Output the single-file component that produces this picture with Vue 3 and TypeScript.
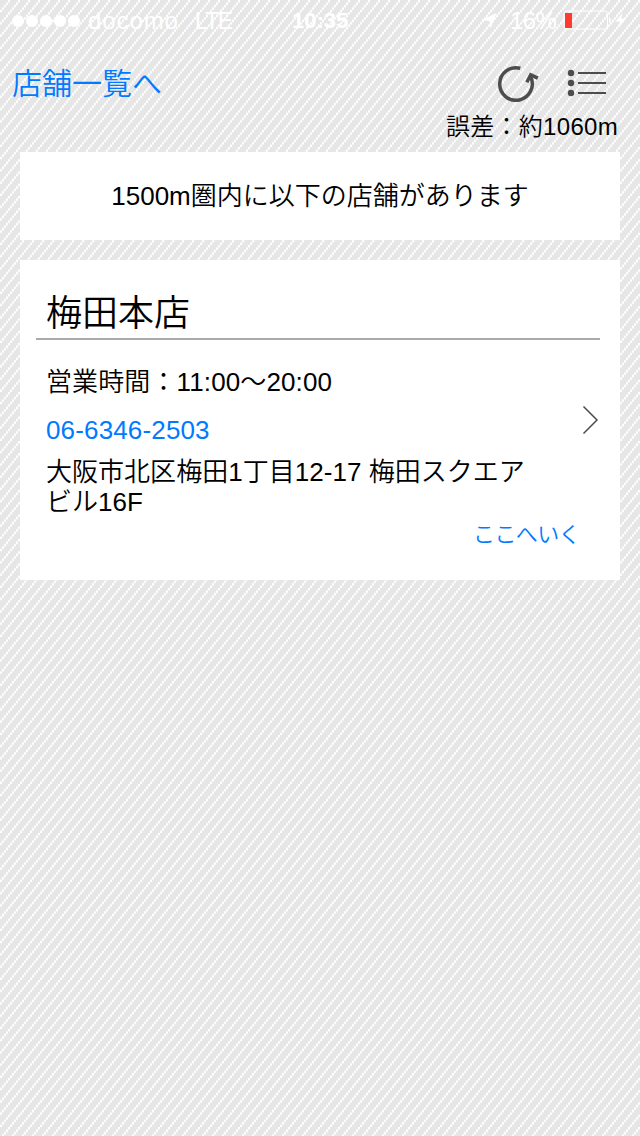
<script setup lang="ts">
const signal: number[] = [1, 2, 3, 4, 5]
const shop = {
  name: '梅田本店',
  hours: '営業時間：11:00〜20:00',
  tel: '06-6346-2503',
  address: ['大阪市北区梅田1丁目12-17 梅田スクエア', 'ビル16F'],
}
</script>

<template>
  <div class="screen">
    <svg class="backdrop" width="640" height="1136">
      <defs>
        <pattern id="stripes" width="10" height="12.25" patternUnits="userSpaceOnUse">
          <rect width="10" height="12.25" fill="#e6e6e6" />
          <path fill="#fff" d="M8 0h2v2.45h-2zM6 2.45h2v2.45h-2zM4 4.9h2v2.45h-2zM2 7.35h2v2.45h-2zM0 9.8h2v2.45h-2z" />
        </pattern>
      </defs>
      <rect width="640" height="1136" fill="url(#stripes)" />
    </svg>
    <header class="status">
      <div class="dots"><i v-for="n in signal" :key="n"></i></div>
      <span class="carrier">docomo</span>
      <span class="network">LTE</span>
      <b class="time">10:35</b>
      <svg class="location" width="16" height="16" viewBox="0 0 16 16"><path fill="#fff" d="M15.500 0 9.500 15.500 8.500 8 0.500 7z" /></svg>
      <span class="percent">16%</span>
      <svg class="battery" width="64" height="20" viewBox="0 0 64 20">
        <rect x="1" y="1" width="43.500" height="18" rx="3" fill="none" stroke="#fff" />
        <rect x="2" y="3" width="7" height="15" fill="#ff3b30" />
        <path fill="#fff" d="M46 6.500q3.500 3.500 0 7zM59.500 3l-7 8.500h4.500l-2 6.500 8-9.500h-5z" />
      </svg>
    </header>
    <nav class="nav">
      <a class="back">店舗一覧へ</a>
      <svg class="refresh" width="44" height="40" viewBox="0 0 44 40" fill="none" stroke="#4d4d4d" stroke-width="3.500">
        <path d="M25.300 4.300A16.300 16.300 0 1 0 35.600 12.800" />
        <path d="M31.800 18.200 35.700 10.800 42.800 14.200" />
      </svg>
      <svg class="list" width="40" height="28" viewBox="0 0 40 28" fill="#4d4d4d">
        <circle cx="4" cy="4" r="3.200" /><circle cx="4" cy="14" r="3.200" /><circle cx="4" cy="24" r="3.200" />
        <path d="M11 3h28v2H11zM11 13h28v2H11zM11 23h28v2H11z" />
      </svg>
    </nav>
    <p class="accuracy">誤差：約1060m</p>
    <section class="notice">1500m圏内に以下の店舗があります</section>
    <section class="card">
      <h1>{{ shop.name }}</h1>
      <p class="hours">{{ shop.hours }}</p>
      <a class="tel">{{ shop.tel }}</a>
      <p class="address"><span v-for="line in shop.address" :key="line">{{ line }}</span></p>
      <a class="go">ここへいく</a>
      <svg class="chevron" width="18" height="30" viewBox="0 0 18 30"><path d="M1.500 1.500 15 15 1.500 28.500" fill="none" stroke="#4d4d4d" stroke-width="1.500" /></svg>
    </section>
  </div>
</template>

<style>
body { margin: 0; background: #e6e6e6; }
</style>
<style scoped>
.screen {
  position: relative;
  width: 640px;
  height: 1136px;
  overflow: hidden;
  color: #000;
  font-family: "Liberation Sans", "Noto Sans CJK JP DemiLight", "Noto Sans CJK JP", sans-serif;
  font-size: 26px;
  font-weight: 350;
}
.backdrop { position: absolute; inset: 0; z-index: -1; }
.status { display: flex; align-items: center; height: 40px; box-sizing: border-box; padding: 2px 0 0 12px; color: #fff; font-size: 24px; }
.dots { display: flex; gap: 2px; width: 68px; }
.dots i { width: 12px; height: 12px; border-radius: 50%; background: #fff; }
.carrier { width: 90px; margin-left: 8px; letter-spacing: 0.9px; }
.network { width: 38px; margin-left: 17px; font-size: 23px; letter-spacing: -1.2px; }
.time { width: 58px; margin-left: 59px; font-size: 22px; font-weight: 700; }
.location { margin-left: 131px; }
.percent { width: 48px; margin-left: 13px; font-size: 24px; letter-spacing: -0.6px; }
.battery { margin-left: 5px; flex: none; position: relative; top: -1px; }
.nav { display: flex; height: 72px; align-items: flex-start; padding-left: 12px; }
.back { width: 483px; margin-top: 24px; color: #007aff; font-size: 30px; line-height: 40px; }
.refresh { margin-top: 24px; }
.list { margin: 29px 0 0 28px; }
.accuracy { height: 40px; margin: 0; padding-right: 22px; font-size: 24px; line-height: 29px; text-align: right; letter-spacing: 0.3px; }
.notice { height: 88px; margin: 0 20px; background: #fff; line-height: 88px; text-align: center; }
.card { position: relative; display: flex; flex-direction: column; align-items: flex-start; height: 320px; margin: 20px 20px 0; box-sizing: border-box; padding: 28px 20px 0 16px; background: #fff; }
h1 { align-self: stretch; height: 52px; margin: 0; padding-left: 10px; box-sizing: border-box; border-bottom: 2px solid #aaa; font-size: 36px; line-height: 52px; font-weight: 350; }
.hours { margin: 27px 0 0 10px; line-height: 30px; letter-spacing: 0.12px; }
.tel { margin: 18px 0 0 10px; color: #007aff; line-height: 30px; letter-spacing: 0.15px; }
.address { display: flex; flex-direction: column; margin: 12px 0 0 10px; line-height: 30px; white-space: nowrap; letter-spacing: 0.03px; }
.go { align-self: flex-end; margin: 3px 20px 0 0; color: #007aff; font-size: 22px; line-height: 30px; letter-spacing: -0.6px; }
.chevron { position: absolute; right: 20px; top: 145px; }
</style>
